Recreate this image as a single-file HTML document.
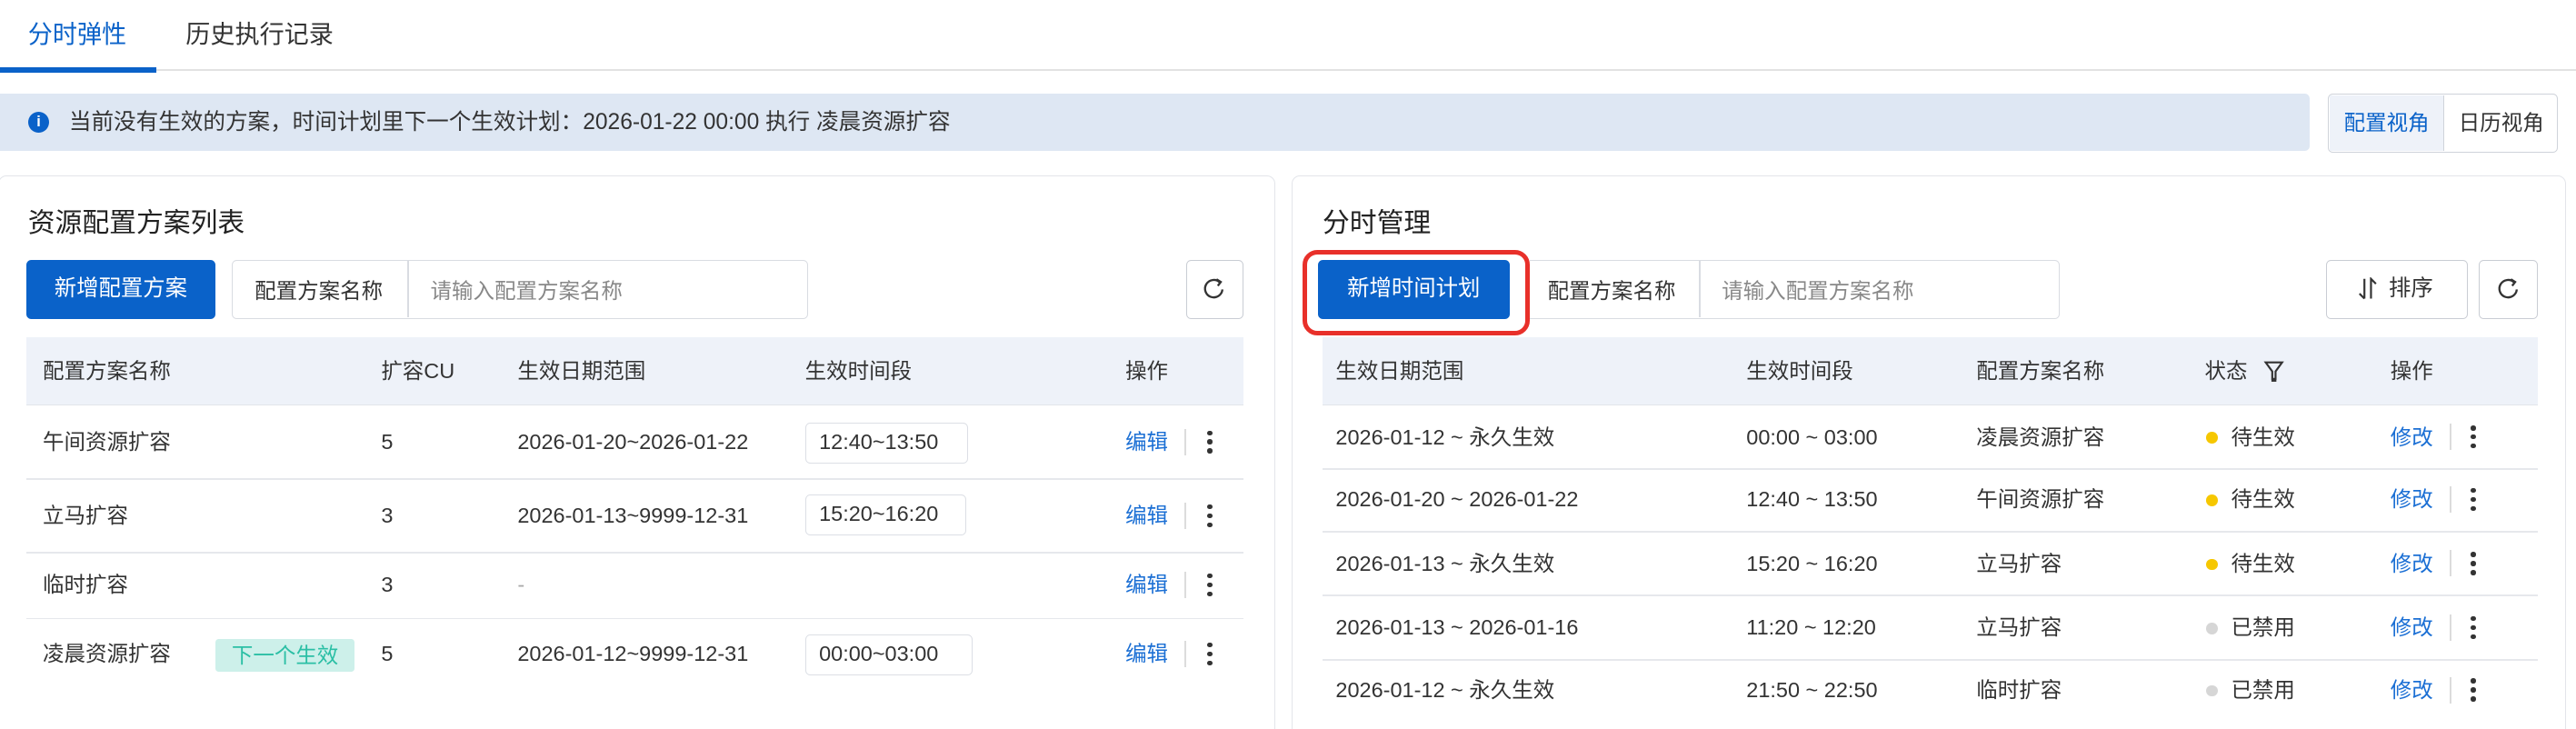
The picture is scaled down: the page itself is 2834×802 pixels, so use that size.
<!DOCTYPE html>
<html><head><meta charset="utf-8"><style>
*{box-sizing:border-box;margin:0;padding:0}
html,body{width:2834px;height:802px;overflow:hidden;background:#fff}
#w{zoom:1.80740;width:1568px;height:444px;position:relative;font-family:"Liberation Sans","Noto Sans CJK SC",sans-serif;font-size:13px;color:#333}
.a{position:absolute;white-space:nowrap;line-height:18px}
.btn{position:absolute;background:#0a62c9;color:#fff;border-radius:3px;display:flex;align-items:center;justify-content:center;font-size:13.5px;line-height:18px}
.box{position:absolute;border:1px solid #d9dce2;border-radius:3px;background:#fff}
.panel{position:absolute;border:1px solid #e3e5ea;border-radius:5px;background:#fff}
.th{position:absolute;background:#eef2f9;border-bottom:1px solid #e2e5ea}
.sep{position:absolute;height:1px;background:#e6e8ec}
.tag{position:absolute;border:1px solid #dcdfe5;border-radius:3px;padding:0 8px;height:25px;line-height:23px}
.lk{color:#1b6fd4}
.vb{position:absolute;width:1px;height:16px;background:#dcdcdc}
.dots{position:absolute;width:3px}
.dots i{display:block;width:3px;height:3px;border-radius:50%;background:#333;margin-bottom:2.5px}
.dot{position:absolute;width:7px;height:7px;border-radius:50%}
</style></head><body><div id="w">
<!-- tabs -->
<div class="a" style="left:17px;top:12px;font-size:15px;color:#0a62c9">分时弹性</div>
<div class="a" style="left:113px;top:12px;font-size:15px;color:#333">历史执行记录</div>
<div class="a" style="left:0;top:42px;width:1568px;height:1px;background:#e2e2e2"></div>
<div class="a" style="left:0;top:41px;width:95px;height:3px;background:#0a62c9"></div>
<!-- banner -->
<div class="a" style="left:0;top:57px;width:1406px;height:35px;background:#dee7f3;border-radius:0 3px 3px 0"></div>
<div class="a" style="left:17px;top:68px;width:13px;height:13px;border-radius:50%;background:#0a62c9;color:#fff;font-size:9px;font-weight:bold;text-align:center;line-height:13px">i</div>
<div class="a" style="left:42px;top:66px;font-size:13.6px;color:#333">当前没有生效的方案，时间计划里下一个生效计划：2026-01-22 00:00 执行 凌晨资源扩容</div>
<div class="box" style="left:1417px;top:57px;width:140px;height:36px;border-color:#cfd3da"></div>
<div class="a" style="left:1418px;top:58px;width:70px;height:34px;background:#eef2f9;border-right:1px solid #cfd3da;color:#0a62c9;text-align:center;line-height:34px;font-size:13px">配置视角</div>
<div class="a" style="left:1489px;top:58px;width:67px;height:34px;text-align:center;line-height:34px;font-size:13px">日历视角</div>

<!-- left panel -->
<div class="panel" style="left:-1px;top:107px;width:777px;height:350px"></div>
<div class="a" style="left:17px;top:126px;font-size:16.5px;line-height:20px;color:#222">资源配置方案列表</div>
<div class="btn" style="left:16px;top:158px;width:115px;height:36px">新增配置方案</div>
<div class="box" style="left:141px;top:158px;width:351px;height:36px"></div>
<div class="a" style="left:248px;top:159px;width:1px;height:34px;background:#d9dce2"></div>
<div class="a" style="left:155px;top:168px">配置方案名称</div>
<div class="a" style="left:262px;top:168px;color:#888">请输入配置方案名称</div>
<div class="box" style="left:722px;top:158px;width:35px;height:36px;border-color:#c9cdd4"></div>
<svg class="a" style="left:731px;top:168px" width="16" height="16" viewBox="0 0 16 16"><path d="M11.5 3.6A5.3 5.3 0 1 0 13.2 8" fill="none" stroke="#333" stroke-width="1.3"/><path d="M9.6 1.8l2.6 1.6-1.8 2.4" fill="none" stroke="#333" stroke-width="1.3"/></svg>
<div class="th" style="left:16px;top:205px;width:741px;height:42px"></div>
<div class="a" style="left:26px;top:217px">配置方案名称</div>
<div class="a" style="left:232px;top:217px">扩容CU</div>
<div class="a" style="left:315px;top:217px">生效日期范围</div>
<div class="a" style="left:490px;top:217px">生效时间段</div>
<div class="a" style="left:685px;top:217px">操作</div>

<div class="a" style="left:26px;top:260px">午间资源扩容</div><div class="a" style="left:232px;top:260px">5</div><div class="a" style="left:315px;top:260px">2026-01-20~2026-01-22</div><div class="tag" style="left:490px;top:257px;width:99px">12:40~13:50</div>
<div class="sep" style="left:16px;top:291px;width:741px"></div>
<div class="a" style="left:26px;top:305px">立马扩容</div><div class="a" style="left:232px;top:305px">3</div><div class="a" style="left:315px;top:305px">2026-01-13~9999-12-31</div><div class="tag" style="left:490px;top:301px;width:98px">15:20~16:20</div>
<div class="sep" style="left:16px;top:336px;width:741px"></div>
<div class="a" style="left:26px;top:347px">临时扩容</div><div class="a" style="left:232px;top:347px">3</div><div class="a" style="left:315px;top:347px;color:#aaa">-</div>
<div class="sep" style="left:16px;top:376px;width:741px"></div>
<div class="a" style="left:26px;top:389px">凌晨资源扩容</div>
<div class="a" style="left:131px;top:389px;width:85px;height:20px;background:#cdf0ea;border-radius:2px;color:#2bbfa5;text-align:center;line-height:20px">下一个生效</div>
<div class="a" style="left:232px;top:389px">5</div><div class="a" style="left:315px;top:389px">2026-01-12~9999-12-31</div><div class="tag" style="left:490px;top:386px;width:102px">00:00~03:00</div>

<div class="a lk" style="left:685px;top:260px">编辑</div><div class="vb" style="left:721px;top:261px"></div><div class="dots" style="left:735px;top:262px"><i></i><i></i><i></i></div>
<div class="a lk" style="left:685px;top:305px">编辑</div><div class="vb" style="left:721px;top:306px"></div><div class="dots" style="left:735px;top:307px"><i></i><i></i><i></i></div>
<div class="a lk" style="left:685px;top:347px">编辑</div><div class="vb" style="left:721px;top:348px"></div><div class="dots" style="left:735px;top:349px"><i></i><i></i><i></i></div>
<div class="a lk" style="left:685px;top:389px">编辑</div><div class="vb" style="left:721px;top:390px"></div><div class="dots" style="left:735px;top:391px"><i></i><i></i><i></i></div>

<!-- right panel -->
<div class="panel" style="left:786px;top:107px;width:776px;height:350px"></div>
<div class="a" style="left:805px;top:126px;font-size:16.5px;line-height:20px;color:#222">分时管理</div>
<div class="a" style="left:793px;top:152px;width:138px;height:52px;border:3px solid #e8302a;border-radius:9px"></div>
<div class="btn" style="left:802px;top:158px;width:117px;height:36px">新增时间计划</div>
<div class="box" style="left:931px;top:158px;width:323px;height:36px;border-left:none;border-radius:0 3px 3px 0"></div>
<div class="a" style="left:1034px;top:159px;width:1px;height:34px;background:#d9dce2"></div>
<div class="a" style="left:942px;top:168px">配置方案名称</div>
<div class="a" style="left:1048px;top:168px;color:#888">请输入配置方案名称</div>
<div class="box" style="left:1416px;top:158px;width:86px;height:36px;border-color:#c9cdd4"></div>
<svg class="a" style="left:1435px;top:169px" width="12" height="14" viewBox="0 0 12 14"><path d="M4 1v12M1 10l3 3M8 13V1l3 3" fill="none" stroke="#333" stroke-width="1.2"/></svg>
<div class="a" style="left:1454px;top:167px;font-size:13.5px">排序</div>
<div class="box" style="left:1509px;top:158px;width:36px;height:36px;border-color:#c9cdd4"></div>
<svg class="a" style="left:1519px;top:168px" width="16" height="16" viewBox="0 0 16 16"><path d="M11.5 3.6A5.3 5.3 0 1 0 13.2 8" fill="none" stroke="#333" stroke-width="1.3"/><path d="M9.6 1.8l2.6 1.6-1.8 2.4" fill="none" stroke="#333" stroke-width="1.3"/></svg>
<div class="th" style="left:805px;top:205px;width:740px;height:42px"></div>
<div class="a" style="left:813px;top:217px">生效日期范围</div>
<div class="a" style="left:1063px;top:217px">生效时间段</div>
<div class="a" style="left:1203px;top:217px">配置方案名称</div>
<div class="a" style="left:1342px;top:217px">状态</div>
<svg class="a" style="left:1377px;top:219px" width="14" height="14" viewBox="0 0 14 14"><path d="M2 1.5h10L8 7v4.5H6V7z" fill="none" stroke="#333" stroke-width="1.2"/><path d="M5.5 12.5h3" stroke="#333" stroke-width="1.5"/></svg>
<div class="a" style="left:1455px;top:217px">操作</div>

<div class="a" style="left:813px;top:257px">2026-01-12 ~ 永久生效</div><div class="a" style="left:1063px;top:257px">00:00 ~ 03:00</div><div class="a" style="left:1203px;top:257px">凌晨资源扩容</div><div class="dot" style="left:1343px;top:263px;background:#f6c700"></div><div class="a" style="left:1358px;top:257px">待生效</div><div class="a lk" style="left:1455px;top:257px">修改</div><div class="vb" style="left:1491px;top:258px"></div><div class="dots" style="left:1504px;top:259px"><i></i><i></i><i></i></div>
<div class="sep" style="left:805px;top:285px;width:740px"></div>
<div class="a" style="left:813px;top:295px">2026-01-20 ~ 2026-01-22</div><div class="a" style="left:1063px;top:295px">12:40 ~ 13:50</div><div class="a" style="left:1203px;top:295px">午间资源扩容</div><div class="dot" style="left:1343px;top:301px;background:#f6c700"></div><div class="a" style="left:1358px;top:295px">待生效</div><div class="a lk" style="left:1455px;top:295px">修改</div><div class="vb" style="left:1491px;top:296px"></div><div class="dots" style="left:1504px;top:297px"><i></i><i></i><i></i></div>
<div class="sep" style="left:805px;top:323px;width:740px"></div>
<div class="a" style="left:813px;top:334px">2026-01-13 ~ 永久生效</div><div class="a" style="left:1063px;top:334px">15:20 ~ 16:20</div><div class="a" style="left:1203px;top:334px">立马扩容</div><div class="dot" style="left:1343px;top:340px;background:#f6c700"></div><div class="a" style="left:1358px;top:334px">待生效</div><div class="a lk" style="left:1455px;top:334px">修改</div><div class="vb" style="left:1491px;top:335px"></div><div class="dots" style="left:1504px;top:336px"><i></i><i></i><i></i></div>
<div class="sep" style="left:805px;top:362px;width:740px"></div>
<div class="a" style="left:813px;top:373px">2026-01-13 ~ 2026-01-16</div><div class="a" style="left:1063px;top:373px">11:20 ~ 12:20</div><div class="a" style="left:1203px;top:373px">立马扩容</div><div class="dot" style="left:1343px;top:379px;background:#d6d6d6"></div><div class="a" style="left:1358px;top:373px">已禁用</div><div class="a lk" style="left:1455px;top:373px">修改</div><div class="vb" style="left:1491px;top:374px"></div><div class="dots" style="left:1504px;top:375px"><i></i><i></i><i></i></div>
<div class="sep" style="left:805px;top:401px;width:740px"></div>
<div class="a" style="left:813px;top:411px">2026-01-12 ~ 永久生效</div><div class="a" style="left:1063px;top:411px">21:50 ~ 22:50</div><div class="a" style="left:1203px;top:411px">临时扩容</div><div class="dot" style="left:1343px;top:417px;background:#d6d6d6"></div><div class="a" style="left:1358px;top:411px">已禁用</div><div class="a lk" style="left:1455px;top:411px">修改</div><div class="vb" style="left:1491px;top:412px"></div><div class="dots" style="left:1504px;top:413px"><i></i><i></i><i></i></div>
</div></body></html>
